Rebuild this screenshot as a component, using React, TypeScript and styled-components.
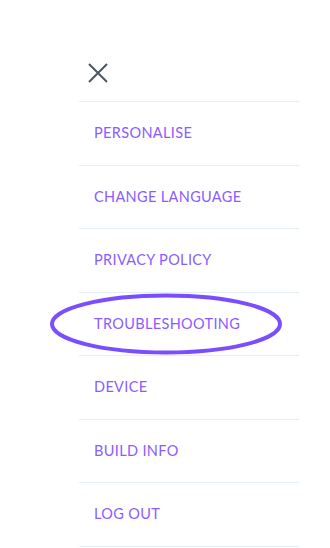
import React from 'react'
import styled, { createGlobalStyle } from 'styled-components'

const GlobalStyle = createGlobalStyle`
	html, body {
		margin: 0;
		padding: 0;
		background: #ffffff;
	}

	body {
		font-family: Lato, 'Noto Sans', sans-serif;
	}
`

const items = [
	'PERSONALISE',
	'CHANGE LANGUAGE',
	'PRIVACY POLICY',
	'TROUBLESHOOTING',
	'DEVICE',
	'BUILD INFO',
	'LOG OUT'
]

const Menu = styled.nav`
	width: 220px;
	margin-left: 79px;
`

const Header = styled.div`
	height: 101px;
	display: flex;
	align-items: flex-start;
	padding: 62px 0 0 8px;
	box-sizing: border-box;
`

const CloseButton = styled.button`
	display: flex;
	align-items: center;
	justify-content: center;
	width: 22px;
	height: 22px;
	padding: 0;
	border: none;
	background: none;
	cursor: pointer;
`

const List = styled.ul`
	list-style: none;
	margin: 0;
	padding: 0;
	border-top: 1px solid #e4eef8;
`

const Row = styled.li`
	position: relative;
	display: flex;
	align-items: center;
	box-sizing: border-box;
	height: 63.5px;
	padding: 0 0 1px 15px;
	border-bottom: 1px solid #e4eef8;
`

const Label = styled.span`
	font-size: 14.5px;
	color: #8a5cff;
	letter-spacing: 0.35px;
`

// hand-drawn marker ring around the highlighted entry
const Highlight = styled.svg`
	position: absolute;
	left: -31px;
	top: -1px;
	pointer-events: none;
`

const CloseIcon = () => (
	<svg width="20" height="20" viewBox="0 0 20 20">
		<path d="M1 1 L19 19 M19 1 L1 19" stroke="#4c5661" strokeWidth="2" fill="none" />
	</svg>
)

const App = () => (
	<>
		<GlobalStyle />
		<Menu>
			<Header>
				<CloseButton aria-label="Close">
					<CloseIcon />
				</CloseButton>
			</Header>
			<List>
				{items.map(item => (
					<Row key={ item }>
						<Label>{item}</Label>
						{item === 'TROUBLESHOOTING' && (
							<Highlight width="236" height="66" viewBox="0 0 236 66">
								<ellipse cx="118" cy="32" rx="114" ry="28.5" stroke="#7a4dff" strokeWidth="4" fill="none" />
							</Highlight>
						)}
					</Row>
				))}
			</List>
		</Menu>
	</>
)

export default App
